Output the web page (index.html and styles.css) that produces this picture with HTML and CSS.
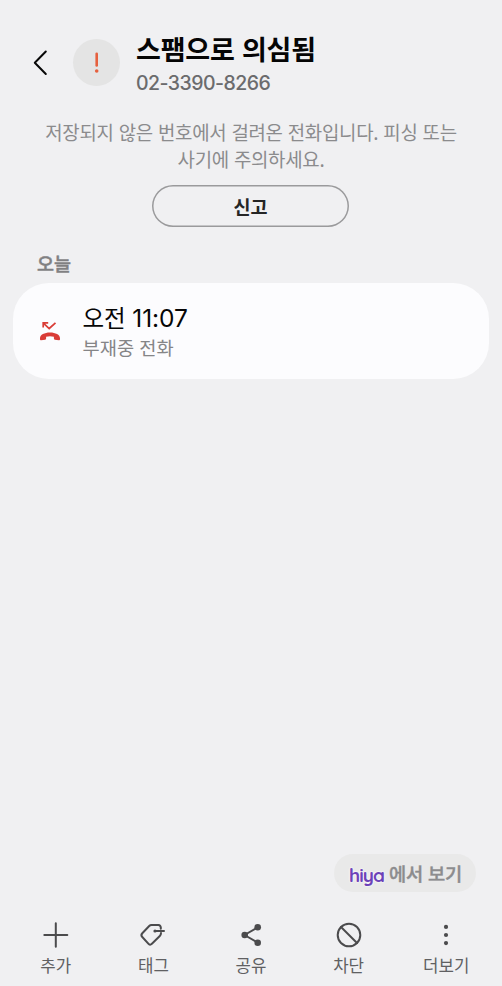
FILE: index.html
```html
<!DOCTYPE html>
<html lang="ko">
<head>
<meta charset="utf-8">
<title>통화 상세</title>
<link rel="stylesheet" href="styles.css">
</head>
<body>
<div class="screen">
  <header class="header">
    <svg class="back" width="18" height="28" viewBox="0 0 18 28"><path d="M14.800 3.500L3.800 14.800L14.800 26"/></svg>
    <div class="avatar">
      <svg width="47" height="47" viewBox="0 0 47 47"><path d="M23.700 14.800V26.500"/><circle cx="23.700" cy="32" r="1.800"/></svg>
    </div>
    <div class="caller">
      <h1 class="name">스팸으로 의심됨</h1>
      <div class="number">02-3390-8266</div>
    </div>
  </header>
  <p class="notice">저장되지 않은 번호에서 걸려온 전화입니다. 피싱 또는<br>사기에 주의하세요.</p>
  <button class="report">신고</button>
  <h2 class="day">오늘</h2>
  <section class="card">
    <svg class="missed" width="22" height="22" viewBox="0 0 22 22">
      <path class="arrow" d="M9.200 2.900H4.200V7.500M4.600 3.300L10.200 8.500L16.500 2.900"/>
      <path class="phone" d="M11 12.600C5.500 12.600 1 14.800 1 18.200V19.300Q1 20.300 2 20.200L6.200 19.700Q7.100 19.600 7.100 18.600V16.800Q11 15.600 14.900 16.800V18.600Q14.900 19.600 15.800 19.700L20 20.200Q21 20.300 21 19.300V18.200C21 14.800 16.500 12.600 11 12.600Z"/>
    </svg>
    <div>
      <div class="time">오전 <span class="digits">11:07</span></div>
      <div class="type">부재중 전화</div>
    </div>
  </section>
  <div class="provider"><span class="hiya">hiya</span><span class="view">에서 보기</span></div>
  <nav class="toolbar">
    <div class="item">
      <svg width="30" height="30" viewBox="0 0 30 30"><path d="M14.800 3.300V26.700M3.300 15H26.300"/></svg>
      <span>추가</span>
    </div>
    <div class="item">
      <svg width="30" height="30" viewBox="0 0 30 30"><path d="M22.800 8.700V7.300Q22.500 5.200 20.500 5H13.500Q12.200 5 11.200 6L4.300 13.200Q2.500 15.100 4.300 17L10.300 23.600Q12 25.600 13.900 23.800L21.800 16Q23 14.800 23 13.100M17 11H26"/><circle class="solid" cx="17" cy="11" r="1.600"/></svg>
      <span>태그</span>
    </div>
    <div class="item">
      <svg width="30" height="30" viewBox="0 0 30 30"><path d="M21.700 7.300L8.500 15L21.700 22.700"/><g class="solid"><circle cx="21.700" cy="7.300" r="3.300"/><circle cx="8.700" cy="15" r="3.300"/><circle cx="21.700" cy="22.700" r="3.300"/></g></svg>
      <span>공유</span>
    </div>
    <div class="item">
      <svg width="30" height="30" viewBox="0 0 30 30"><circle cx="15" cy="15" r="11.300"/><path d="M7 7L23 23"/></svg>
      <span>차단</span>
    </div>
    <div class="item">
      <svg width="30" height="30" viewBox="0 0 30 30"><g class="solid"><circle cx="15" cy="6.900" r="2.100"/><circle cx="15" cy="15" r="2.100"/><circle cx="15" cy="23.100" r="2.100"/></g></svg>
      <span>더보기</span>
    </div>
  </nav>
</div>
</body>
</html>
```
FILE: styles.css
```css
* { box-sizing: border-box; }
body {
  margin: 0;
  background: #f0f0f2;
  font-family: "Noto Sans CJK KR", sans-serif;
  white-space: nowrap;
}
svg { display: block; fill: none; stroke-linecap: round; stroke-linejoin: round; }
.screen { display: flex; flex-direction: column; height: 986px; overflow: hidden; }
.header { display: flex; padding: 32px 0 0 31px; height: 117px; }
.back { margin-top: 16px; stroke: #080808; stroke-width: 2; }
.avatar { margin: 7px 0 0 24px; width: 47px; height: 47px; border-radius: 50%; background: #e4e4e4; }
.avatar path { stroke: #e6603e; stroke-width: 2.6; }
.avatar circle { fill: #e6603e; }
.caller { margin-left: 16px; }
.name { margin: 0; font-size: 27px; line-height: 34px; font-weight: 700; letter-spacing: -0.2px; color: #050505; }
.number { padding-top: 2px; font: 500 19.5px/30px Inter, sans-serif; letter-spacing: -0.53px; color: #6b6b6d; }
.notice { margin: 1px 0 0; font-size: 18.9px; line-height: 27px; letter-spacing: -0.27px; text-align: center; color: #8b8b8d; }
.report {
  align-self: center;
  margin: 13px 1px 0 0;
  padding: 0;
  width: 197px;
  height: 42px;
  border: 0;
  box-shadow: inset 0 0 0 1.5px #9a9a9c;
  border-radius: 21px;
  background: none;
  color: #252525;
  font: 700 18.5px/41px "Noto Sans CJK KR", sans-serif;
}
.day { margin: 22px 0 0 37px; font-size: 18.5px; line-height: 28px; font-weight: 500; color: #808082; -webkit-text-stroke: 0.5px #808082; }
.card {
  display: flex;
  margin: 6px 13px 0;
  padding: 17px 0 0 26px;
  height: 96px;
  border-radius: 36px;
  background: #fcfcfe;
}
.missed { margin: 20px 21.500px 0 0; }
.arrow { stroke: #d93c36; stroke-width: 1.700; stroke-linecap: butt; stroke-linejoin: miter; }
.phone { fill: #d93c36; }
.time { font-size: 23.5px; line-height: 34px; color: #060606; }
.digits { font-family: Inter, sans-serif; font-size: 24.5px; letter-spacing: -0.1px; }
.type { margin-top: -2px; font-size: 18.7px; line-height: 28px; color: #858587; }
.provider {
  display: flex;
  align-self: flex-end;
  margin: auto 26px 0 0;
  padding-left: 15px;
  width: 142px;
  height: 38px;
  border-radius: 19px;
  background: #e9e9e9;
}
.hiya {
  width: 40px;
  color: #6d42b8;
  font: 700 19px/43px Quicksand, Lato, sans-serif;
  letter-spacing: -0.9px;
  text-shadow: 0 0 2px #fff, 0 0 2px #fff;
}
.view { font-size: 18.7px; line-height: 37px; font-weight: 500; letter-spacing: -0.2px; color: #8c8c8e; -webkit-text-stroke: 0.4px #8c8c8e; }
.toolbar { display: flex; padding: 28px 7px 0; height: 94px; }
.item { display: flex; flex: 1; flex-direction: column; align-items: center; font-size: 16.8px; line-height: 30px; color: #606062; }
.item svg { stroke: #4b4b4d; stroke-width: 2; }
.solid { fill: #4b4b4d; stroke: none; }
```
